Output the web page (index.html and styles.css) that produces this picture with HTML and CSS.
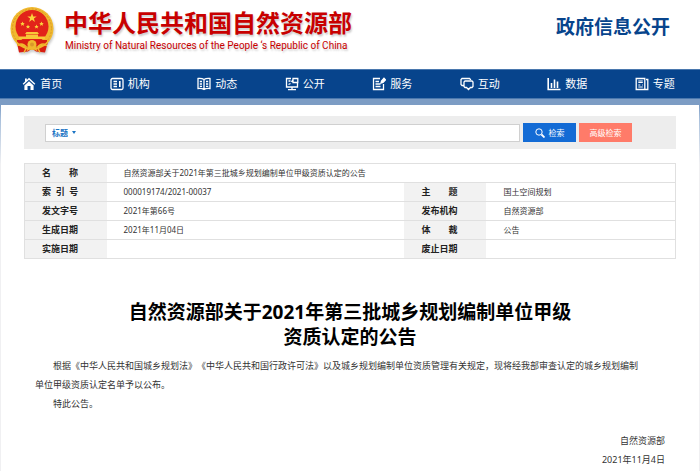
FILE: index.html
```html
<!DOCTYPE html>
<html lang="zh-CN">
<head>
    <meta charset="UTF-8">
    <meta name="viewport" content="width=device-width, initial-scale=1.0">
    <title>自然资源部 政府信息公开</title>
    <link rel="stylesheet" href="styles.css">
</head>
<body>
    <header class="header">
        <a class="logo" href="#">
            <svg class="emblem" viewBox="0 0 44 46" aria-hidden="true">
                <path d="M6 31l3 14 9-1 4-3 4 3 9 1 4-14z" fill="#d81e12"/>
                <circle cx="22" cy="21" r="21.5" fill="#f0b92e"/>
                <circle cx="22" cy="21" r="19.5" fill="none" stroke="#d9982a" stroke-width="1" stroke-dasharray="2 1.5"/>
                <circle cx="22" cy="19" r="16.5" fill="#e2231a"/>
                <path d="M22 5.5l1.2 3.4h3.5L23.900 11l1 3.400L22 12.300l-2.900 2.100 1-3.400-2.800-2.100h3.500z" fill="#fbd33c"/>
                <g fill="#fbd33c">
                    <path d="M12.500 14l.7 1.500h1.600l-1.200 1.100.4 1.700-1.500-.9-1.500.9.4-1.700-1.200-1.100h1.600z"/>
                    <path d="M31.500 14l.7 1.500h1.600l-1.200 1.100.4 1.700-1.500-.9-1.500.9.4-1.700-1.200-1.100h1.600z"/>
                    <path d="M18 17l.6 1.400h1.500l-1.100 1 .4 1.600-1.400-.8-1.400.8.4-1.600-1.100-1h1.500z"/>
                    <path d="M26.500 17l.6 1.400h1.500l-1.100 1 .4 1.600-1.400-.8-1.400.8.4-1.600-1.100-1h1.500z"/>
                </g>
                <path d="M16.500 24.500h11l1.500 2h-14zM16 27h12v2h7v2.500H9V29h7z" fill="#f8c838"/>
                <path d="M7 32.500h30v1.500l-2 2c-4-1-6 1-8 3h-10c-2-2-4-4-8-3l-2-2z" fill="#d81e12"/>
                <circle cx="22" cy="37" r="4.500" fill="#f0b92e"/>
                <circle cx="22" cy="37" r="2" fill="#d9982a"/>
                <path d="M7 38c5-2 7 1 9 3l-2 4M37 38c-5-2-7 1-9 3l2 4M17 43c3-3 7-3 10 0" fill="none" stroke="#f0b92e" stroke-width="1.500"/>
            </svg>
            <span class="logo-text">
                <strong>中华人民共和国自然资源部</strong>
                <span class="logo-en">Ministry of Natural Resources of the People ‘s Republic of China</span>
            </span>
        </a>
        <div class="channel">政府信息公开</div>
    </header>

    <nav class="nav">
        <a href="#">
            <svg viewBox="0 0 14 14"><path d="M7 .8l6.300 6-.9 1L7 2.700 1.600 7.800l-.9-1L3 4.600V1.500h1.800v1.400z" fill="#fff"/><path d="M7 4.200l4.600 4.300v4.500H8.500V9h-3v4H2.400V8.500z" fill="#fff"/></svg>
            首页
        </a>
        <a href="#">
            <svg viewBox="0 0 14 14"><rect x="1" y="1.500" width="12" height="11" rx="1.500"/><path d="M3.500 4.500H7M3.500 7H7M3.500 9.500H7M9.800 4v6" stroke-width="1.600"/></svg>
            机构
        </a>
        <a href="#">
            <svg viewBox="0 0 14 14"><path d="M7 2.500C5.500 1.500 3 1.300 1 1.500v10c2-.2 4.500 0 6 1 1.500-1 4-1.200 6-1v-10c-2-.2-4.500 0-6 1zM7 2.500v10M2.800 4.500H5M2.800 7H5M2.800 9.300H5M9 4.500h2.200M9 7h2.200M9 9.300h2.200"/></svg>
            动态
        </a>
        <a href="#">
            <svg viewBox="0 0 14 14"><path d="M6 1.500H1.500v8.500h11V5M3.500 4h2M3.500 7.500l2-1M8 1.500h4.800v4H8zM8 2.500L6.500 5M7 10v2.500M3 12.700h8"/></svg>
            公开
        </a>
        <a href="#">
            <svg viewBox="0 0 14 14"><path d="M8 1.500H1.500v11h10V7M3.500 4.500H7M3.500 7h5M3.500 9.500h5"/><path d="M9 6l.5-2L12 1.300l1.500 1.500L11 5.500z" fill="#fff" stroke="none"/></svg>
            服务
        </a>
        <a href="#">
            <svg viewBox="0 0 14 14"><path d="M3.500 8.500H2l-1-1v-5l1-1h7.500l1 1V3M5 4h7l1 1v4.500l-1 1h-1.500L8.500 12.500l-2-2H5l-1-1V5z"/></svg>
            互动
        </a>
        <a href="#">
            <svg viewBox="0 0 14 14"><path d="M1.200 1v11.500H13.500M4.500 6v5M7.500 2.500V11M10.500 4.500V11" stroke-width="1.600"/></svg>
            数据
        </a>
        <a href="#">
            <svg viewBox="0 0 14 14"><path d="M1.200 1.500h8.600v11H1.200zM11 2.500h1.800v10H9.500"/><path d="M3.300 4h4.500M3.300 5.500h4.500M3.300 8h2M3.300 10h4.500M7 8h.8" stroke-width="1.200"/></svg>
            专题
        </a>
    </nav>

    <div class="page">
        <main class="content">
            <form class="search">
                <div class="search-box">
                    <span class="search-type">
                        <select aria-label="检索范围">
                            <option>标题</option>
                            <option>正文</option>
                        </select>
                    </span>
                    <input type="text" aria-label="检索内容">
                </div>
                <button type="submit" class="btn">
                    <svg viewBox="0 0 10 10"><circle cx="4" cy="4" r="3.200"/><path d="M6.500 6.500l3 3" stroke-width="1.800"/></svg>
                    检索
                </button>
                <button type="button" class="btn btn-advanced">高级检索</button>
            </form>

            <table class="info">
                <colgroup>
                    <col class="col-label">
                    <col>
                    <col class="col-label">
                    <col class="col-side">
                </colgroup>
                <tr>
                    <th>名　　称</th>
                    <td colspan="3">自然资源部关于2021年第三批城乡规划编制单位甲级资质认定的公告</td>
                </tr>
                <tr>
                    <th>索&nbsp;&nbsp;引&nbsp;&nbsp;号</th>
                    <td>000019174/2021-00037</td>
                    <th>主　　题</th>
                    <td>国土空间规划</td>
                </tr>
                <tr>
                    <th>发文字号</th>
                    <td>2021年第66号</td>
                    <th>发布机构</th>
                    <td>自然资源部</td>
                </tr>
                <tr>
                    <th>生成日期</th>
                    <td>2021年11月04日</td>
                    <th>体　　裁</th>
                    <td>公告</td>
                </tr>
                <tr>
                    <th>实施日期</th>
                    <td></td>
                    <th>废止日期</th>
                    <td></td>
                </tr>
            </table>

            <article class="article">
                <h1>自然资源部关于2021年第三批城乡规划编制单位甲级<br>资质认定的公告</h1>
                <p>根据《中华人民共和国城乡规划法》《中华人民共和国行政许可法》以及城乡规划编制单位资质管理有关规定，现将经我部审查认定的城乡规划编制<br>单位甲级资质认定名单予以公布。</p>
                <p>特此公告。</p>
                <div class="sign">
                    自然资源部<br>
                    2021年11月4日
                </div>
            </article>
        </main>
    </div>
</body>
</html>
```
FILE: styles.css
```css
* {
    margin: 0;
    padding: 0;
    box-sizing: border-box;
}

body {
    font-family: 'Noto Sans', 'Noto Sans CJK SC', sans-serif;
    font-size: 9px;
    color: #333;
    background-color: #fff;
}

a {
    color: inherit;
    text-decoration: none;
}

/* header */
.header {
    display: flex;
    justify-content: space-between;
    height: 69px;
    padding: 7px 30px 0 10px;
}

.logo {
    display: flex;
    gap: 10px;
    color: #c80000;
}

.emblem {
    width: 44px;
    height: 47px;
    filter: drop-shadow(1px 2px 1px rgba(0, 0, 0, 0.2));
}

.logo-text {
    display: flex;
    flex-direction: column;
    text-shadow: 1px 2px 2px rgba(0, 0, 0, 0.2);
}

.logo-text strong {
    font-size: 24px;
    line-height: 32px;
}

.logo-en {
    padding-left: 1px;
    font-family: Roboto, sans-serif;
    font-size: 10px;
    line-height: 14px;
}

.channel {
    font-size: 19px;
    line-height: 40px;
    font-weight: bold;
    color: #07448c;
}

/* navigation */
.nav {
    display: flex;
    height: 30px;
    background-color: #07448c;
    border-top: 1px solid #4a78ae;
    border-bottom: 1px solid #4a78ae;
}

.nav a {
    flex: 1;
    display: flex;
    align-items: center;
    justify-content: center;
    gap: 4px;
    padding-right: 3px;
    font-size: 11px;
    line-height: 28px;
    color: #fff;
}

.nav svg {
    width: 14px;
    height: 14px;
    fill: none;
    stroke-width: 1.3;
}

.nav path,
.nav rect {
    stroke: #fff;
}

.nav a:first-child path {
    stroke: none;
}

.page {
    padding: 6px 1px 0;
    background: linear-gradient(#7c9cc4 0, #7c9cc4 6px, #a9c0dc 20px, #f0f0f2 65px);
}

.content {
    padding: 11px 23px 2px;
    background-color: #fff;
}

/* search bar */
.search {
    display: flex;
    align-items: center;
    gap: 3px;
    height: 33px;
    padding: 0 44px 0 21px;
    background-color: #ededed;
}

.search-box {
    flex: 1;
    display: flex;
    height: 18px;
    background-color: #fff;
    border: 1px solid #d0d0d0;
}

.search-type {
    display: flex;
    align-items: center;
    gap: 4px;
    padding-left: 6px;
}

.search-type::after {
    content: '';
    border: 2px solid transparent;
    border-top: 3px solid #1a74c4;
    border-bottom: none;
}

.search-type select {
    appearance: none;
    border: none;
    outline: none;
    background: none;
    font-family: inherit;
    font-size: 8px;
    font-weight: bold;
    color: #1a74c4;
}

.search-box input {
    flex: 1;
    min-width: 0;
    padding: 0 6px;
    border: none;
    outline: none;
    font-size: 8px;
}

.btn {
    display: flex;
    align-items: center;
    justify-content: center;
    gap: 4px;
    width: 53px;
    height: 19px;
    border: none;
    background-color: #136bd5;
    color: #fff;
    font-family: inherit;
    font-size: 8px;
    cursor: pointer;
}

.btn svg {
    width: 10px;
    height: 10px;
    fill: none;
    stroke: #fff;
}

.btn-advanced {
    background-color: #ff7b69;
}

/* document info */
.info {
    width: 100%;
    margin-top: 14px;
    table-layout: fixed;
    border-collapse: collapse;
    border: 1px solid #e0e0e0;
}

.col-label {
    width: 82px;
}

.col-side {
    width: 189px;
}

.info tr {
    height: 19px;
    border-bottom: 1px solid #e0e0e0;
}

.info th,
.info td {
    padding: 0 17px;
    line-height: 16px;
    text-align: left;
    white-space: nowrap;
}

.info th {
    font-size: 9px;
    color: #222;
    background-color: #f2f2f2;
}

.info td {
    font-size: 8px;
}

/* article */
.article {
    margin-top: 41px;
    padding: 0 11px;
    line-height: 19px;
    text-spacing-trim: space-all;
}

.article h1 {
    margin-bottom: 6px;
    font-size: 19px;
    line-height: 25px;
    text-align: center;
    color: #000;
}

.article p {
    text-indent: 2em;
}

.sign {
    margin-top: 18px;
    text-align: right;
}
```
